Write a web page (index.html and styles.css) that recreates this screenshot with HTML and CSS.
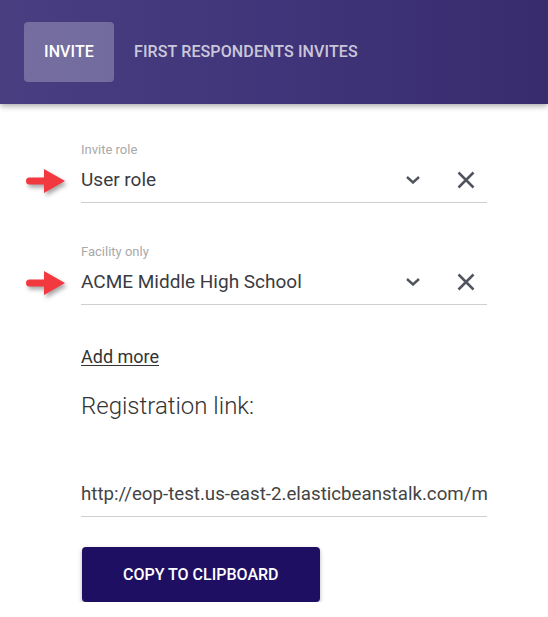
FILE: index.html
```html
<!DOCTYPE html>
<html>
<head>
<meta charset="utf-8">
<link rel="stylesheet" href="styles.css">
</head>
<body>
<header class="topbar">
  <nav class="tabs">
    <div class="tab tab-active">INVITE</div>
    <div class="tab">FIRST RESPONDENTS INVITES</div>
  </nav>
</header>
<main class="content">
  <div class="field">
    <svg class="pointer" width="40" height="26" viewBox="0 0 40 26"><path d="M3.5 9.5 H18 V1 L39 13 L18 25 V16.5 H3.5 A3.5 3.5 0 0 1 3.5 9.5 Z" fill="#f2393f"/></svg>
    <div class="field-label">Invite role</div>
    <div class="field-row">
      <span class="field-value">User role</span>
      <svg class="chev" width="14" height="8" viewBox="0 0 14 8"><polyline points="1,1 7,6.5 13,1" fill="none" stroke="#50545c" stroke-width="2.4"/></svg>
      <svg class="clear" width="18" height="18" viewBox="0 0 18 18"><path d="M1.5 1.5 L16.5 16.5 M16.5 1.5 L1.5 16.5" stroke="#50545c" stroke-width="2.5" fill="none"/></svg>
    </div>
  </div>
  <div class="field field-second">
    <svg class="pointer" width="40" height="26" viewBox="0 0 40 26"><path d="M3.5 9.5 H18 V1 L39 13 L18 25 V16.5 H3.5 A3.5 3.5 0 0 1 3.5 9.5 Z" fill="#f2393f"/></svg>
    <div class="field-label">Facility only</div>
    <div class="field-row">
      <span class="field-value">ACME Middle High School</span>
      <svg class="chev" width="14" height="8" viewBox="0 0 14 8"><polyline points="1,1 7,6.5 13,1" fill="none" stroke="#50545c" stroke-width="2.4"/></svg>
      <svg class="clear" width="18" height="18" viewBox="0 0 18 18"><path d="M1.5 1.5 L16.5 16.5 M16.5 1.5 L1.5 16.5" stroke="#50545c" stroke-width="2.5" fill="none"/></svg>
    </div>
  </div>
  <a class="add-more" href="#">Add more</a>
  <h2 class="reg-title">Registration link:</h2>
  <div class="link-field"><span class="link-text">http://eop-test.us-east-2.elasticbeanstalk.com/my-invite/registration?token=abc</span></div>
  <button class="copy-btn">COPY TO CLIPBOARD</button>
</main>
</body>
</html>
```
FILE: styles.css
```css
html, body {
  margin: 0;
  padding: 0;
  background: #ffffff;
  font-family: Roboto, "Liberation Sans", Arial, sans-serif;
}
.topbar {
  height: 104px;
  box-sizing: border-box;
  padding: 22px 0 0 24px;
  background: linear-gradient(90deg, #483e80 0%, #40357a 50%, #382c6d 100%);
  box-shadow: 0 2px 6px rgba(0, 0, 0, 0.35);
}
.tabs {
  display: flex;
}
.tab {
  height: 60px;
  line-height: 60px;
  padding: 0 20px;
  font-size: 16px;
  font-weight: 500;
  letter-spacing: 0.12px;
  color: rgba(255, 255, 255, 0.74);
  border-radius: 4px;
}
.tab-active {
  background: rgba(255, 255, 255, 0.25);
  color: #ffffff;
}
.content {
  padding: 38px 0 0 81px;
  width: 406px;
}
.field {
  position: relative;
}
.field-second {
  margin-top: 41px;
}
.pointer {
  position: absolute;
  left: -55px;
  top: 26px;
  filter: drop-shadow(2px 3px 2px rgba(0, 0, 0, 0.35));
}
.field-label {
  font-size: 13px;
  line-height: 16px;
  color: #a9a9a9;
}
.field-row {
  display: flex;
  align-items: center;
  height: 44px;
  border-bottom: 1px solid #cfcfcf;
}
.field-value {
  flex: 1;
  font-size: 19px;
  line-height: 44px;
  color: #3a3b42;
}
.chev {
  margin-right: 37px;
}
.clear {
  margin-right: 12px;
}
.add-more {
  display: block;
  margin-top: 41px;
  font-size: 18px;
  line-height: 21px;
  color: #333333;
  text-decoration: underline;
  text-underline-offset: 2px;
  width: max-content;
}
.reg-title {
  margin: 25px 0 0 0;
  font-size: 24px;
  line-height: 28px;
  font-weight: 300;
  color: #333333;
}
.link-field {
  margin-top: 56px;
  height: 36px;
  padding-bottom: 4px;
  line-height: 36px;
  font-size: 18.7px;
  color: #444444;
  white-space: nowrap;
  overflow: hidden;
  border-bottom: 1px solid #cfcfcf;
}
.copy-btn {
  display: block;
  margin: 30px 0 0 1px;
  height: 55px;
  padding: 0 41px;
  border: none;
  border-radius: 4px;
  background: #1f0f63;
  color: #ffffff;
  font-family: Roboto, "Liberation Sans", Arial, sans-serif;
  font-size: 16px;
  font-weight: 500;
  box-shadow: 0 2px 4px rgba(0, 0, 0, 0.3);
}
```
